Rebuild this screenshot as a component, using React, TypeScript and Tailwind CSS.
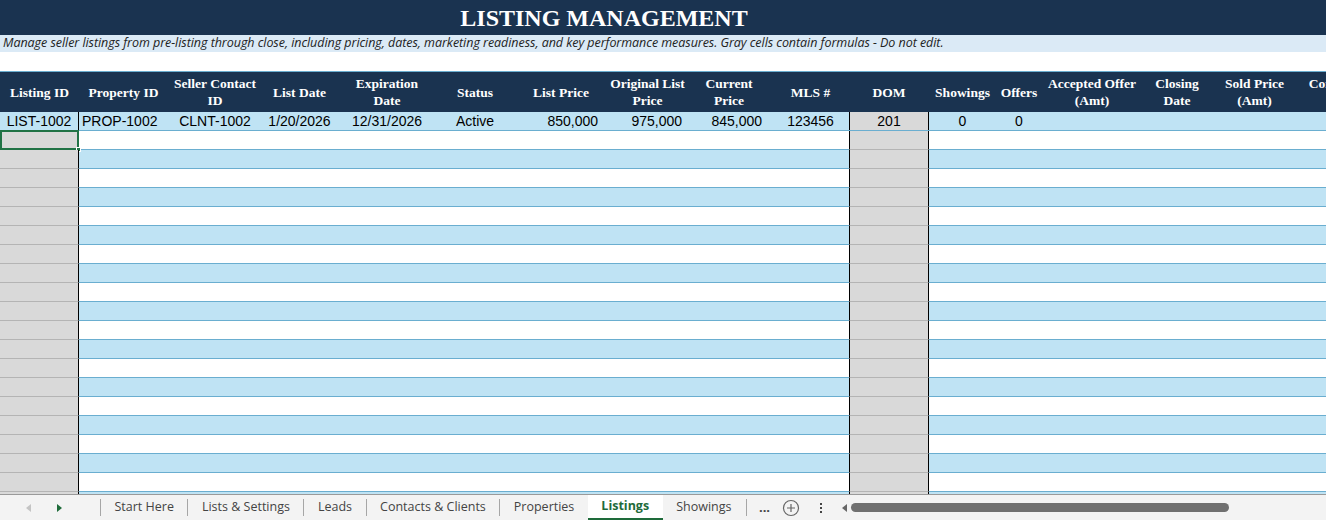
import React from "react";

type Col = { label: string[]; w: number };

const cols: Col[] = [
  { label: ["Listing ID"], w: 79 },
  { label: ["Property ID"], w: 89 },
  { label: ["Seller Contact", "ID"], w: 94 },
  { label: ["List Date"], w: 75 },
  { label: ["Expiration", "Date"], w: 100 },
  { label: ["Status"], w: 76 },
  { label: ["List Price"], w: 96 },
  { label: ["Original List", "Price"], w: 77 },
  { label: ["Current", "Price"], w: 86 },
  { label: ["MLS #"], w: 77 },
  { label: ["DOM"], w: 80 },
  { label: ["Showings"], w: 67 },
  { label: ["Offers"], w: 46 },
  { label: ["Accepted Offer", "(Amt)"], w: 100 },
  { label: ["Closing", "Date"], w: 70 },
  { label: ["Sold Price", "(Amt)"], w: 85 },
  { label: ["Commission", "(Amt)"], w: 95 },
];

const data: { v: string; cls: string }[] = [
  { v: "LIST-1002", cls: "justify-center" },
  { v: "PROP-1002", cls: "justify-start pl-[3px]" },
  { v: "CLNT-1002", cls: "justify-center" },
  { v: "1/20/2026", cls: "justify-center" },
  { v: "12/31/2026", cls: "justify-center" },
  { v: "Active", cls: "justify-center" },
  { v: "850,000", cls: "justify-end pr-[11px]" },
  { v: "975,000", cls: "justify-end pr-[4px]" },
  { v: "845,000", cls: "justify-end pr-[10px]" },
  { v: "123456", cls: "justify-center" },
  { v: "201", cls: "justify-center" },
  { v: "0", cls: "justify-center" },
  { v: "0", cls: "justify-center" },
  { v: "", cls: "" },
  { v: "", cls: "" },
  { v: "", cls: "" },
  { v: "", cls: "" },
];

const serif = { fontFamily: '"Liberation Serif", "DejaVu Serif", serif' };

function HeaderRow() {
  return (
    <div className="flex h-[41px] bg-[#1a3350] border-t border-[#6aaed0]">
      {cols.map((c, i) => (
        <div
          key={i}
          style={{ width: c.w, ...serif }}
          className="shrink-0 flex flex-col items-center justify-center text-white font-bold text-[13.5px] leading-[17px] text-center whitespace-nowrap"
        >
          {c.label.map((l, j) => (
            <span key={j}>{l}</span>
          ))}
        </div>
      ))}
    </div>
  );
}

function DataRow() {
  return (
    <div className="flex h-[19px] bg-[#bfe3f4] border-b border-[#6aaed0]">
      {cols.map((c, i) => {
        const gray = i === 10;
        return (
          <div
            key={i}
            style={{ width: c.w, fontFamily: '"Liberation Sans", Arial, sans-serif' }}
            className={`shrink-0 flex items-center text-[14px] text-black leading-none ${data[i].cls} ${
              gray ? "bg-[#d9d9d9] border-l border-r border-black" : ""
            } ${i === 0 ? "border-r border-black" : ""}`}
          >
            {data[i].v}
          </div>
        );
      })}
    </div>
  );
}

function EmptyRow({ idx }: { idx: number }) {
  const blue = idx % 2 === 1;
  return (
    <div className={`flex h-[19px] shrink-0 ${blue ? "bg-[#bfe3f4]" : "bg-white"}`}>
      {cols.map((c, i) => {
        const grayCol = i === 0 || i === 10;
        if (grayCol) {
          return (
            <div
              key={i}
              style={{ width: c.w }}
              className={`shrink-0 relative bg-[#d9d9d9] border-b border-[#b4b4b4] ${
                i === 0 ? "border-r border-r-black" : "border-l border-r border-l-black border-r-black"
              }`}
            >
              {i === 0 && idx === 0 && (
                <>
                  <div className="absolute left-0 top-[-1px] right-[-1px] bottom-[-1px] border-2 border-[#217346]" />
                  <div className="absolute right-[-3px] bottom-[-3px] w-[5px] h-[5px] bg-[#217346] border border-white" />
                </>
              )}
            </div>
          );
        }
        return (
          <div
            key={i}
            style={{ width: c.w }}
            className="shrink-0 border-b border-[#6aaed0]"
          />
        );
      })}
    </div>
  );
}

function Sep() {
  return <div className="w-px h-[17px] bg-[#a6a6a6] shrink-0" />;
}

function Tab({ label, active }: { label: string; active?: boolean }) {
  return (
    <div
      className={`h-full shrink-0 flex items-center px-[13.5px] text-[12.5px] ${
        active
          ? "bg-white text-[#1e6b3a] font-bold border-b-2 border-[#1e6b3a]"
          : "text-[#444]"
      }`}
      style={{ fontFamily: '"Open Sans", "Noto Sans", sans-serif' }}
    >
      {label}
    </div>
  );
}

function Tri({ dir, color }: { dir: "l" | "r"; color: string }) {
  return (
    <svg width="6" height="8" viewBox="0 0 6 8">
      <path d={dir === "l" ? "M5 0L0 4L5 8Z" : "M1 0L6 4L1 8Z"} fill={color} />
    </svg>
  );
}

export default function App() {
  return (
    <div className="w-[1326px] h-[520px] overflow-hidden bg-white flex flex-col">
      <div className="h-[35px] bg-[#1a3350] flex items-center shrink-0">
        <div
          className="w-[1208px] text-center text-white font-bold text-[24px] leading-none pt-[1px]"
          style={serif}
        >
          LISTING MANAGEMENT
        </div>
      </div>
      <div
        className="h-[17px] bg-[#dbeaf6] flex items-center pl-[3px] italic text-[12.5px] text-[#222] shrink-0 whitespace-nowrap"
        style={{ fontFamily: '"Open Sans", "Noto Sans", sans-serif', letterSpacing: "-0.05px" }}
      >
        Manage seller listings from pre-listing through close, including pricing, dates, marketing readiness, and key
        performance measures. Gray cells contain formulas - Do not edit.
      </div>
      <div className="h-[19px] bg-white shrink-0" />
      <div className="flex-1 min-h-0 overflow-hidden">
        <div className="w-[1500px] flex flex-col">
          <HeaderRow />
          <DataRow />
          {Array.from({ length: 20 }).map((_, i) => (
            <EmptyRow key={i} idx={i} />
          ))}
        </div>
      </div>
      <div className="h-[26px] shrink-0 bg-[#f3f3f3] border-t border-[#9a9a9a] flex items-center">
        <div className="w-[746px] h-full flex items-center overflow-hidden shrink-0">
          <div className="w-[100px] h-full flex items-center shrink-0">
            <div className="ml-[26px] flex">
              <Tri dir="l" color="#c4c4c4" />
            </div>
            <div className="ml-[24px] flex">
              <Tri dir="r" color="#1e6b3a" />
            </div>
          </div>
          <Sep />
          <Tab label="Start Here" />
          <Sep />
          <Tab label="Lists & Settings" />
          <Sep />
          <Tab label="Leads" />
          <Sep />
          <Tab label="Contacts & Clients" />
          <Sep />
          <Tab label="Properties" />
          <Tab label="Listings" active />
          <Tab label="Showings" />
        </div>
        <Sep />
        <div className="w-[35px] text-center text-[13px] font-bold text-[#444] shrink-0" style={{ fontFamily: '"Open Sans", sans-serif' }}>
          ...
        </div>
        <svg width="18" height="18" viewBox="0 0 18 18" className="shrink-0">
          <circle cx="9" cy="9" r="7.5" fill="none" stroke="#666" strokeWidth="1.2" />
          <path d="M9 5v8M5 9h8" stroke="#666" strokeWidth="1.2" />
        </svg>
        <div className="ml-[20px] flex flex-col gap-[2px] items-center">
          <div className="w-[2px] h-[2px] bg-[#444]" />
          <div className="w-[2px] h-[2px] bg-[#444]" />
          <div className="w-[2px] h-[2px] bg-[#444]" />
        </div>
        <div className="ml-[20px] flex">
          <Tri dir="l" color="#666" />
        </div>
        <div className="ml-[3px] w-[378px] h-[9px] rounded-full bg-[#707070]" />
      </div>
    </div>
  );
}
